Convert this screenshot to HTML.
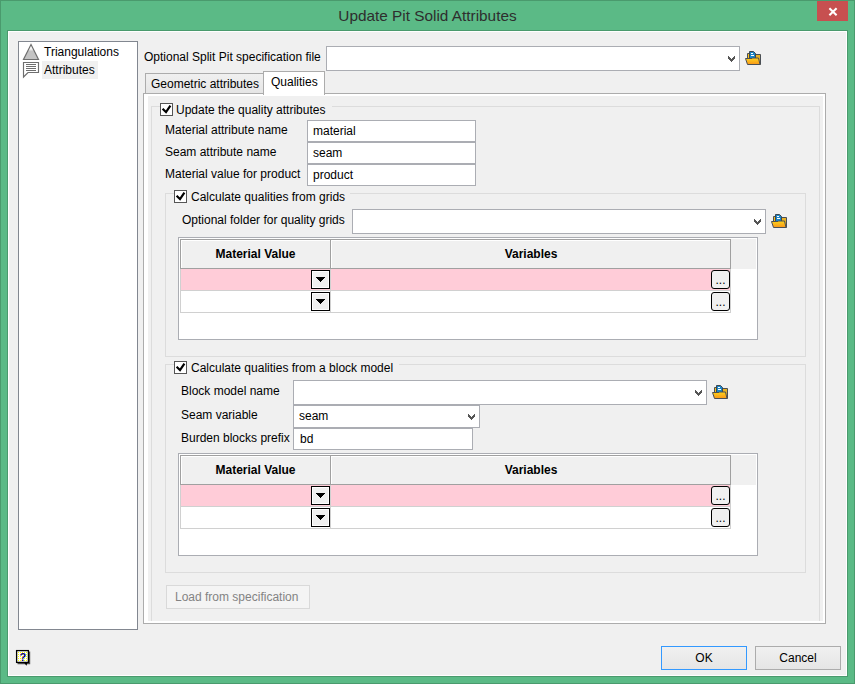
<!DOCTYPE html>
<html><head><meta charset="utf-8">
<style>
*{box-sizing:border-box;margin:0;padding:0}
html,body{width:855px;height:684px;overflow:hidden}
body{position:relative;background:#4A9A6D;font-family:"Liberation Sans",sans-serif;font-size:12px;color:#000}
.a{position:absolute}
.t{position:absolute;white-space:pre;line-height:14px;height:14px}
.tb{position:absolute;background:#fff;border:1px solid #ABADB3}
.gb{position:absolute;border:1px solid #DCDCDC}
.cb{position:absolute;width:13px;height:13px;border:1px solid #555;background:#fff}
.chev{position:absolute;width:8px;height:6px}
.fold{position:absolute;width:17px;height:15px}
</style></head><body>
<svg width="0" height="0" style="position:absolute">
<defs>
<linearGradient id="fg" x1="0" y1="0" x2="0" y2="1"><stop offset="0" stop-color="#FFD51C"/><stop offset="1" stop-color="#F8961A"/></linearGradient>
<symbol id="folder" viewBox="0 0 20 18">
 <path d="M12.5 5.5 H17.5 V15.5 H12.5Z" fill="#E9B224" stroke="#4A4F55"/>
 <path d="M4.5 4.5 H6.5 V9.5 H4.5Z" fill="#F9C21A" stroke="#4A4F55"/>
 <path d="M6.5 2.5 H10.5 L12.5 4.5 V9.5 H6.5Z" fill="#1D86C6" stroke="#3A4752"/>
 <path d="M8 4.5 H10 M8 6.5 H11" stroke="#fff"/>
 <path d="M2.5 9.5 H9 L9.5 9 H15.5 L17 15.5 H4.5Z" fill="url(#fg)" stroke="#4A4F55"/>
</symbol>
<symbol id="chev" viewBox="0 0 7 6">
 <path d="M0 0h1v1H0zM6 0h1v1H6zM0 1h2v1H0zM5 1h2v1H5zM0 2h3v1H0zM4 2h3v1H4zM1 3h5v1H1zM2 4h3v1H2zM3 5h1v1H3z" fill="#555"/>
</symbol>
<symbol id="check" viewBox="0 0 13 13">
 <path d="M2.6 5.8 L6 9 L10.4 2.6" fill="none" stroke="#000" stroke-width="2.2"/>
</symbol>
</defs></svg>
<!-- window frame -->
<div class="a" style="left:1px;top:1px;width:853px;height:682px;background:#5BBA86"></div>
<div class="a" style="left:7px;top:30px;width:841px;height:647px;background:#4A9A6D"></div>
<div class="a" style="left:8px;top:31px;width:839px;height:645px;background:#F0F0F0;border:1px solid #fff"></div>
<div class="t" style="left:0;top:8px;width:855px;text-align:center;font-size:15.35px;line-height:15px;height:15px;color:#2E2E2E">Update Pit Solid Attributes</div>
<div class="a" style="left:817px;top:1px;width:31px;height:20px;background:#C75050"></div>
<svg class="a" style="left:817px;top:1px" width="31" height="20"><path d="M12.4 7.3 L19.6 14.2 M19.6 7.3 L12.4 14.2" stroke="#fff" stroke-width="2.1"/></svg>

<!-- tree panel -->
<div class="a" style="left:18px;top:41px;width:120px;height:589px;background:#fff;border:1px solid #828790"></div>
<div class="a" style="left:42px;top:61px;width:56px;height:18px;background:#F0F0F0"></div>
<svg class="a" style="left:22px;top:43px" width="18" height="36">
 <linearGradient id="tg" x1="0" y1="0" x2="0" y2="1"><stop offset="0" stop-color="#fff"/><stop offset="0.3" stop-color="#F4F4F4"/><stop offset="0.45" stop-color="#C3C3C3"/></linearGradient><path d="M9 1.5 L16.5 16.5 L1.5 16.5 Z" fill="url(#tg)" stroke="#6E6E6E" stroke-width="1.2" stroke-linejoin="miter"/>
 <path d="M1.5 19.5 H16.5 V29.5 H6 L1.5 34 Z" fill="#fff" stroke="#6E6E6E" stroke-width="1.15"/>
 <path d="M4 21.5 H14 M4 23.5 H14 M4 25.5 H14 M4 27.5 H14" stroke="#6E6E6E" stroke-width="1"/>
</svg>
<div class="t" style="left:44px;top:45px">Triangulations</div>
<div class="t" style="left:44px;top:63px">Attributes</div>

<!-- top combo -->
<div class="t" style="left:144px;top:50px">Optional Split Pit specification file</div>
<div class="tb" style="left:326px;top:46px;width:414px;height:25px"></div>

<!-- tabs -->
<div class="a" style="left:145px;top:73px;width:119px;height:21px;border:1px solid #ACACAC;border-bottom:none;background:linear-gradient(#F0F0F0,#E5E5E5)"></div>
<div class="t" style="left:151px;top:77px">Geometric attributes</div>
<div class="a" style="left:143px;top:93px;width:683px;height:531px;border:1px solid #ACACAC;background:#fff"></div>
<div class="a" style="left:263px;top:71px;width:62px;height:24px;border:1px solid #ACACAC;border-bottom:none;background:#fff"></div>
<div class="t" style="left:271px;top:75px">Qualities</div>
<div class="a" style="left:148px;top:96px;width:675px;height:525px;background:#F0F0F0"></div>

<!-- group 1 -->
<div class="gb" style="left:151px;top:106px;width:669px;height:515px;border-bottom:none"></div>
<div class="a" style="left:160px;top:100px;width:172px;height:16px;background:#F0F0F0"></div>
<div class="cb" style="left:160px;top:103px"></div>
<div class="t" style="left:176px;top:103px">Update the quality attributes</div>
<div class="t" style="left:165px;top:123px">Material attribute name</div>
<div class="t" style="left:165px;top:145px">Seam attribute name</div>
<div class="t" style="left:165px;top:167px">Material value for product</div>
<div class="tb" style="left:307px;top:120px;width:169px;height:22px"></div>
<div class="tb" style="left:307px;top:142px;width:169px;height:22px"></div>
<div class="tb" style="left:307px;top:164px;width:169px;height:22px"></div>
<div class="t" style="left:313px;top:124px">material</div>
<div class="t" style="left:313px;top:146px">seam</div>
<div class="t" style="left:313px;top:168px">product</div>

<!-- group 2 -->
<div class="gb" style="left:165px;top:193px;width:641px;height:164px"></div>
<div class="a" style="left:174px;top:188px;width:176px;height:16px;background:#F0F0F0"></div>
<div class="cb" style="left:174px;top:190px"></div>
<div class="t" style="left:191px;top:190px">Calculate qualities from grids</div>
<div class="t" style="left:182px;top:213px">Optional folder for quality grids</div>
<div class="tb" style="left:352px;top:209px;width:414px;height:25px"></div>

<!-- group 3 -->
<div class="gb" style="left:165px;top:364px;width:641px;height:209px"></div>
<div class="a" style="left:174px;top:359px;width:225px;height:16px;background:#F0F0F0"></div>
<div class="cb" style="left:174px;top:361px"></div>
<div class="t" style="left:191px;top:361px">Calculate qualities from a block model</div>
<div class="t" style="left:181px;top:384px">Block model name</div>
<div class="t" style="left:181px;top:408px">Seam variable</div>
<div class="t" style="left:181px;top:431px">Burden blocks prefix</div>
<div class="tb" style="left:293px;top:380px;width:414px;height:25px"></div>
<div class="tb" style="left:293px;top:405px;width:187px;height:23px"></div>
<div class="tb" style="left:293px;top:428px;width:180px;height:22px"></div>
<div class="t" style="left:299px;top:409px">seam</div>
<div class="t" style="left:300px;top:432px">bd</div>

<!-- load button -->
<div class="a" style="left:166px;top:585px;width:144px;height:24px;border:1px solid #D9D9D9;background:#F4F4F4"></div>
<div class="t" style="left:175px;top:590px;color:#838383">Load from specification</div>

<!-- bottom -->
<div class="a" style="left:661px;top:646px;width:86px;height:24px;border:1px solid #3399FF;background:linear-gradient(#F0F0F0,#E5E5E5)"></div>
<div class="t" style="left:661px;top:651px;width:86px;text-align:center">OK</div>
<div class="a" style="left:755px;top:646px;width:86px;height:24px;border:1px solid #ACACAC;background:linear-gradient(#F0F0F0,#E5E5E5)"></div>
<div class="t" style="left:755px;top:651px;width:86px;text-align:center">Cancel</div>
<svg class="a" style="left:728px;top:56px" width="7" height="6" shape-rendering="crispEdges"><use href="#chev"/></svg>
<svg class="a" style="left:743px;top:49px" width="20" height="18"><use href="#folder"/></svg>
<svg class="a" style="left:754px;top:219px" width="7" height="6" shape-rendering="crispEdges"><use href="#chev"/></svg>
<svg class="a" style="left:769px;top:212px" width="20" height="18"><use href="#folder"/></svg>
<svg class="a" style="left:695px;top:390px" width="7" height="6" shape-rendering="crispEdges"><use href="#chev"/></svg>
<svg class="a" style="left:710px;top:383px" width="20" height="18"><use href="#folder"/></svg>
<svg class="a" style="left:468px;top:414px" width="7" height="6" shape-rendering="crispEdges"><use href="#chev"/></svg>
<svg class="a" style="left:160px;top:103px" width="13" height="13"><use href="#check"/></svg>
<svg class="a" style="left:174px;top:190px" width="13" height="13"><use href="#check"/></svg>
<svg class="a" style="left:174px;top:361px" width="13" height="13"><use href="#check"/></svg>
<div class="a" style="left:178px;top:237px;width:580px;height:103px;border:1px solid #ABADB3;background:#fff"></div>
<div class="a" style="left:179px;top:238px;width:577px;height:31px;background:#F0F0F0;border-top:1px solid #fff;border-left:1px solid #fff"></div>
<div class="a" style="left:180px;top:239px;width:551px;height:30px;border:1px solid #A0A0A0;border-top-color:#A0A0A0;box-shadow:inset 1px 1px 0 #fff"></div>
<div class="a" style="left:330px;top:239px;width:1px;height:30px;background:#A0A0A0"></div>
<div class="a" style="left:331px;top:240px;width:1px;height:28px;background:#fff"></div>
<div class="t" style="left:180px;top:247px;width:151px;text-align:center;font-weight:bold">Material Value</div>
<div class="t" style="left:331px;top:247px;width:400px;text-align:center;font-weight:bold">Variables</div>
<div class="a" style="left:181px;top:269px;width:549px;height:21px;background:#FFCCD8"></div>
<div class="a" style="left:180px;top:269px;width:1px;height:44px;background:#D0D0D0"></div>
<div class="a" style="left:180px;top:290px;width:551px;height:1px;background:#D0D0D0"></div>
<div class="a" style="left:180px;top:312px;width:551px;height:1px;background:#D0D0D0"></div>
<div class="a" style="left:330px;top:269px;width:1px;height:44px;background:#D0D0D0"></div>
<div class="a" style="left:730px;top:269px;width:1px;height:44px;background:#D0D0D0"></div>
<div class="a" style="left:311px;top:270px;width:19px;height:19px;border:1px solid #000;background:#F0F0F0;box-shadow:inset 1px 1px 0 #fff,inset -1px -1px 0 #fff"></div>
<svg class="a" style="left:316px;top:277px" width="9" height="5" shape-rendering="crispEdges"><path d="M0 0h9v1H0zM1 1h7v1H1zM2 2h5v1H2zM3 3h3v1H3zM4 4h1v1H4z" fill="#000"/></svg>
<div class="a" style="left:711px;top:270px;width:19px;height:19px;border:1px solid #000;border-radius:3px;background:#F0F0F0"></div>
<div class="t" style="left:711px;top:273px;width:19px;text-align:center;font-size:12px">...</div>
<div class="a" style="left:311px;top:292px;width:19px;height:19px;border:1px solid #000;background:#F0F0F0;box-shadow:inset 1px 1px 0 #fff,inset -1px -1px 0 #fff"></div>
<svg class="a" style="left:316px;top:299px" width="9" height="5" shape-rendering="crispEdges"><path d="M0 0h9v1H0zM1 1h7v1H1zM2 2h5v1H2zM3 3h3v1H3zM4 4h1v1H4z" fill="#000"/></svg>
<div class="a" style="left:711px;top:292px;width:19px;height:19px;border:1px solid #000;border-radius:3px;background:#F0F0F0"></div>
<div class="t" style="left:711px;top:295px;width:19px;text-align:center;font-size:12px">...</div>
<div class="a" style="left:178px;top:453px;width:580px;height:103px;border:1px solid #ABADB3;background:#fff"></div>
<div class="a" style="left:179px;top:454px;width:577px;height:31px;background:#F0F0F0;border-top:1px solid #fff;border-left:1px solid #fff"></div>
<div class="a" style="left:180px;top:455px;width:551px;height:30px;border:1px solid #A0A0A0;border-top-color:#A0A0A0;box-shadow:inset 1px 1px 0 #fff"></div>
<div class="a" style="left:330px;top:455px;width:1px;height:30px;background:#A0A0A0"></div>
<div class="a" style="left:331px;top:456px;width:1px;height:28px;background:#fff"></div>
<div class="t" style="left:180px;top:463px;width:151px;text-align:center;font-weight:bold">Material Value</div>
<div class="t" style="left:331px;top:463px;width:400px;text-align:center;font-weight:bold">Variables</div>
<div class="a" style="left:181px;top:485px;width:549px;height:21px;background:#FFCCD8"></div>
<div class="a" style="left:180px;top:485px;width:1px;height:44px;background:#D0D0D0"></div>
<div class="a" style="left:180px;top:506px;width:551px;height:1px;background:#D0D0D0"></div>
<div class="a" style="left:180px;top:528px;width:551px;height:1px;background:#D0D0D0"></div>
<div class="a" style="left:330px;top:485px;width:1px;height:44px;background:#D0D0D0"></div>
<div class="a" style="left:730px;top:485px;width:1px;height:44px;background:#D0D0D0"></div>
<div class="a" style="left:311px;top:486px;width:19px;height:19px;border:1px solid #000;background:#F0F0F0;box-shadow:inset 1px 1px 0 #fff,inset -1px -1px 0 #fff"></div>
<svg class="a" style="left:316px;top:493px" width="9" height="5" shape-rendering="crispEdges"><path d="M0 0h9v1H0zM1 1h7v1H1zM2 2h5v1H2zM3 3h3v1H3zM4 4h1v1H4z" fill="#000"/></svg>
<div class="a" style="left:711px;top:486px;width:19px;height:19px;border:1px solid #000;border-radius:3px;background:#F0F0F0"></div>
<div class="t" style="left:711px;top:489px;width:19px;text-align:center;font-size:12px">...</div>
<div class="a" style="left:311px;top:508px;width:19px;height:19px;border:1px solid #000;background:#F0F0F0;box-shadow:inset 1px 1px 0 #fff,inset -1px -1px 0 #fff"></div>
<svg class="a" style="left:316px;top:515px" width="9" height="5" shape-rendering="crispEdges"><path d="M0 0h9v1H0zM1 1h7v1H1zM2 2h5v1H2zM3 3h3v1H3zM4 4h1v1H4z" fill="#000"/></svg>
<div class="a" style="left:711px;top:508px;width:19px;height:19px;border:1px solid #000;border-radius:3px;background:#F0F0F0"></div>
<div class="t" style="left:711px;top:511px;width:19px;text-align:center;font-size:12px">...</div>
<svg class="a" style="left:14px;top:648px" width="20" height="20">
 <path d="M3.5 15.6 H15.6 V3.5" fill="none" stroke="#505050" stroke-width="1.2"/>
 <rect x="2.6" y="2.6" width="11.8" height="11.8" fill="#fff" stroke="#000" stroke-width="1.3"/>
 <g fill="#FFFF00" shape-rendering="crispEdges"><rect x="4" y="4" width="1" height="1"/><rect x="4" y="6" width="1" height="1"/><rect x="4" y="8" width="1" height="1"/><rect x="4" y="10" width="1" height="1"/><rect x="4" y="12" width="1" height="1"/><rect x="6" y="4" width="1" height="1"/><rect x="6" y="6" width="1" height="1"/><rect x="6" y="8" width="1" height="1"/><rect x="6" y="10" width="1" height="1"/><rect x="6" y="12" width="1" height="1"/><rect x="8" y="4" width="1" height="1"/><rect x="8" y="6" width="1" height="1"/><rect x="8" y="8" width="1" height="1"/><rect x="8" y="10" width="1" height="1"/><rect x="8" y="12" width="1" height="1"/><rect x="10" y="4" width="1" height="1"/><rect x="10" y="6" width="1" height="1"/><rect x="10" y="8" width="1" height="1"/><rect x="10" y="10" width="1" height="1"/><rect x="10" y="12" width="1" height="1"/><rect x="12" y="4" width="1" height="1"/><rect x="12" y="6" width="1" height="1"/><rect x="12" y="8" width="1" height="1"/><rect x="12" y="10" width="1" height="1"/><rect x="12" y="12" width="1" height="1"/></g>
 <path d="M9.5 14 L12.5 17.8 L13.5 14Z" fill="#000"/>
 <text x="8.8" y="13" font-family="Liberation Sans" font-weight="bold" font-size="11" fill="#000080" text-anchor="middle">?</text>
</svg>
</body></html>
